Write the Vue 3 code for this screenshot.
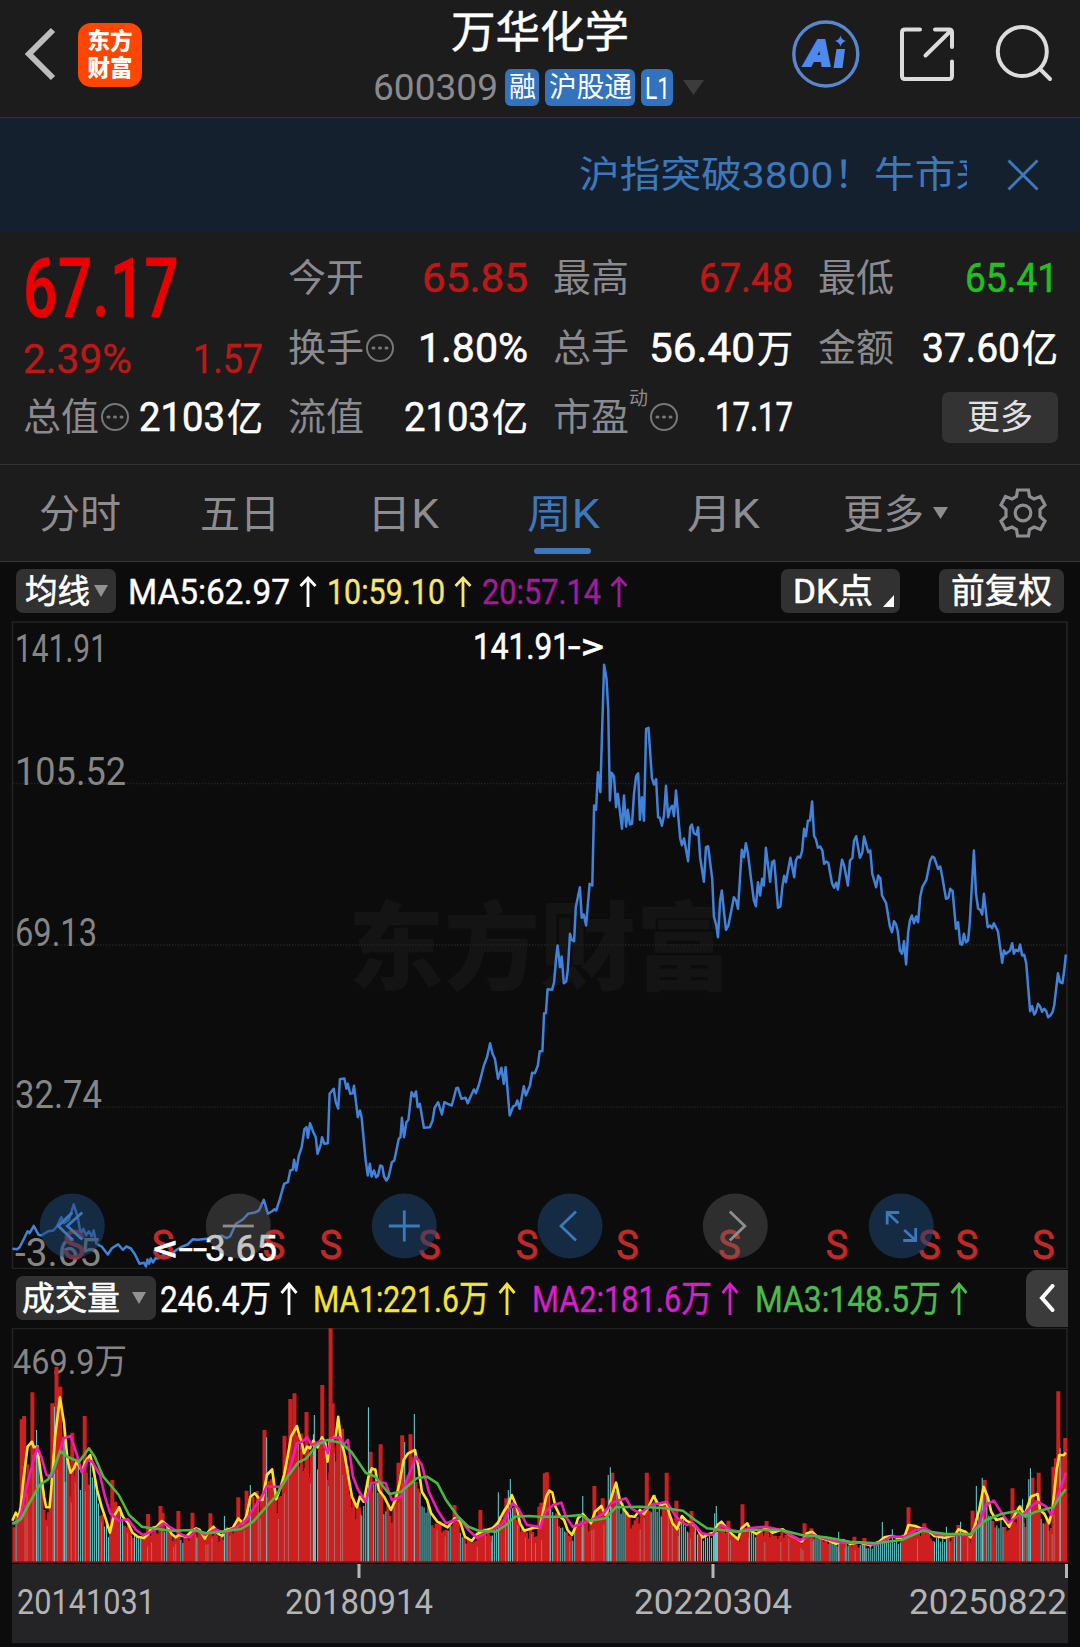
<script setup>
import { h } from 'vue'

// Text set to an exact advance width, centred on its cap height
const FitText = (p) =>
  h('svg', { width: p.w, height: p.size, style: 'display:block;overflow:visible;flex:none' }, [
    h('text', {
      x: 0, y: p.size * 0.857, textLength: p.w, lengthAdjust: 'spacingAndGlyphs',
      'font-size': p.size, 'font-weight': p.weight || 400, fill: 'currentColor',
      stroke: 'currentColor', 'stroke-width': p.thick || 0
    }, p.t)
  ])
FitText.props = ['t', 'w', 'size', 'weight', 'thick']

const stats = [
  [
    { label: '今开', value: '65.85', w: 106, tone: 'red' },
    { label: '最高', value: '67.48', w: 94, tone: 'red' },
    { label: '最低', value: '65.41', w: 93, tone: 'green' }
  ],
  [
    { label: '换手', dots: true, value: '1.80%', w: 110 },
    { label: '总手', value: '56.40', w: 106, unit: '万' },
    { label: '金额', value: '37.60', w: 98, unit: '亿' }
  ]
]

const tabs = [
  { t: '分时', x: 39, w: 82 }, { t: '五日', x: 200, w: 80 }, { t: '日K', x: 367, w: 72 },
  { t: '周K', x: 527, w: 73, on: true }, { t: '月K', x: 687, w: 73 }, { t: '更多', x: 843, w: 81 }
].map((t, i, a) => ({ ...t, gap: t.x - (i ? a[i - 1].x + a[i - 1].w : 0) }))

const SX = 0.34439
const SY = 1 / 3
const parse = (s, ox, oy) =>
  s.trim().split(/\s+/).map((p) => {
    const [x, y] = p.split(',').map(Number)
    return [+(x * SX + ox).toFixed(1), +(y * SY + oy).toFixed(1)]
  })
const str = (a) => a.map((p) => p.join(',')).join(' ')

const price = str([
  ...parse(`36,685 50,686 57,680 66,662 80,632 86,638 98,616 112,643 120,645 140,632 155,630 165,618 178,590 186,608 200,598 214,552 226,590 234,640 242,625 250,645 258,632 266,648 272,630 280,670 295,678 313,702 325,683 343,671 357,688 367,678 380,684 392,702 405,730 418,727 424,738 428,717 433,730 438,714 444,726 452,712 460,714 480,700 495,705 510,690 525,680 545,672 560,656 575,658 600,655 625,648 645,646 658,653 668,648 676,630 685,610 705,597 720,580 740,576 752,570 766,538 778,580 790,572 797,566 802,570 812,538 825,490 836,485 843,450 850,448 854,418 860,450 868,405 876,380 884,326 890,320 894,352 900,308 910,335 917,350 922,400 932,370 935,350 942,370 952,368 957,220 969,205 975,245 982,264 987,176 1000,174 1006,205 1010,190 1017,220 1024,218 1028,196 1039,290 1045,270 1050,290 1062,420 1068,465 1074,430 1079,468 1086,450 1092,470 1098,465 1104,435 1110,438 1115,468 1122,480 1128,470 1138,425 1145,420 1158,355 1163,350 1167,292 1173,350 1180,305 1186,298 1195,215 1202,228 1208,213 1213,260 1219,250 1231,322 1248,320 1256,300 1262,262 1272,245 1283,282 1290,245 1300,250 1312,255 1325,203 1330,202 1340,235 1352,232 1358,248 1368,225 1376,207 1382,218 1390,195 1405,135 1414,110 1423,68 1430,100 1437,115 1446,175 1456,142 1463,190 1468,140 1480,285 1490,258 1497,254 1502,240 1509,265 1521,197 1527,225 1533,210 1539,195 1545,157 1553,158 1562,135 1567,92`, 0, 1020),
  ...parse(`7,1232 12,1118 17,1118 22,1046 35,1048 41,1025 47,950 51,915 58,980 63,948 69,1028 76,1023 81,985 87,880 92,898 99,902 104,800 116,740 121,832 127,822 134,855 144,730 152,735 157,495 163,508 168,395 175,455 186,73 193,115 198,205 203,480 208,397 215,408 221,500 226,460 238,565 244,465 250,558 255,508 261,552 267,550 273,460 279,408 285,398 290,538 296,470 302,541 308,265 315,262 325,412 331,432 337,416 343,530 348,532 354,556 360,525 366,436 372,530 378,504 384,496 389,527 395,450 407,594 412,614 418,594 430,662 436,560 441,552 447,578 454,583 459,560 465,650 476,724 482,620 488,617 500,715 505,828 512,855 517,890 523,780 528,750 535,820 540,868 547,855 563,770 570,782 575,805 586,628 592,650 598,608 604,640 612,710 621,780 627,797 633,725 639,765 645,715 650,735 656,622 668,724 674,665 680,660 691,802 698,798 704,735 709,706 714,725 727,652 738,710 743,660 749,648 755,652 761,632 767,565 772,587 778,541 784,540 790,483 796,587 801,596 807,622 813,618 820,630 825,670 831,663 837,667 848,728 854,742 860,727 865,747 877,658 883,675 894,735 900,660 907,652 912,600 918,587 929,652 936,637 941,588 953,635 959,630 965,700 976,740 982,705 988,713 993,765 1005,788 1016,858 1022,875 1028,842 1034,852 1039,873 1045,930 1051,940 1057,902 1063,972 1069,875 1074,840 1080,825 1086,848 1092,828 1098,845 1104,770 1110,740 1122,718 1133,660 1139,648 1145,652 1156,685 1162,678 1168,708 1179,775 1186,772 1191,745 1198,752 1208,865 1214,845 1220,910 1226,913 1231,880 1237,905 1243,900 1248,845 1260,630 1266,760 1272,804 1278,808 1284,822 1289,760 1300,860 1307,855 1313,863 1318,848 1330,873 1342,967 1347,930 1353,940 1365,930 1371,908 1376,940 1382,928 1389,932 1394,912 1400,945 1406,943 1412,970 1423,1112 1429,1097 1435,1122 1440,1115 1446,1090 1452,1098 1458,1114 1464,1105 1470,1112 1475,1130 1482,1125 1488,1115 1493,1095 1504,998 1510,1025 1517,1028 1522,990 1527,942`, 540, 640)
])

const ma1 = [
  ...parse(`36,632 46,608 54,622 60,590 68,510 80,410 93,395 98,412 108,410 116,470 128,560 134,592 144,592 152,500 160,380 174,262 186,340 196,450 205,488 215,475 222,455 230,468 238,485 247,455 262,435 270,470 282,540 295,590 308,630 319,668 330,620 346,592 357,620 372,640 385,668 400,680 418,684 430,672 440,655 455,650 470,633 485,645 498,672 510,682 520,675 540,680 555,665 570,655 580,660 595,686 605,665 620,650 632,670 645,678 655,660 675,655 692,625 705,640 715,620 727,560 740,550 752,565 762,570 775,495 790,478 802,568 815,530 825,495 835,440 845,380 862,348 868,372 877,400 882,430 892,410 900,415 910,392 922,412 935,382 945,400 951,455 958,390 975,380 982,320 990,390 1000,430 1010,490 1022,560 1036,592 1045,560 1056,575 1070,500 1080,475 1090,480 1100,540 1115,560 1135,600 1148,570 1160,520 1172,450 1185,430 1205,420 1215,470 1225,545 1240,570 1252,610 1270,635 1300,652 1320,625 1335,632 1350,680 1370,693 1385,672 1405,662 1430,655 1445,640 1460,610 1475,585 1486,555 1500,590 1510,640 1522,662 1545,655 1566,652`, 0, 1310),
  ...parse(`0,650 10,600 18,560 27,542 36,548 45,590 60,622 70,630 80,660 93,675 103,650 110,625 125,612 135,625 148,640 160,605 178,588 190,615 200,590 208,560 221,518 232,570 245,600 258,618 275,620 290,600 302,612 315,590 330,558 342,580 352,585 368,580 375,610 385,640 398,658 412,618 425,632 440,640 455,652 472,682 490,672 505,668 515,645 527,635 540,652 560,675 575,688 585,655 602,640 612,662 628,672 645,660 660,655 675,668 705,658 725,675 745,685 760,695 775,670 790,665 805,680 835,690 860,702 880,690 900,702 925,697 960,706 985,695 1000,682 1020,678 1045,685 1060,675 1070,645 1090,648 1105,655 1125,660 1145,678 1175,683 1205,675 1215,658 1235,665 1250,682 1262,650 1275,600 1288,530 1300,560 1310,605 1325,630 1345,625 1362,650 1378,615 1393,590 1408,615 1425,560 1445,552 1452,600 1465,612 1478,640 1488,600 1500,480 1508,435 1520,436 1527,428`, 540, 1310)
]
const ma2 = [
  ...parse(`36,638 50,640 62,605 75,540 90,480 108,412 120,440 135,495 152,500 168,440 185,385 205,378 222,430 238,488 255,450 268,455 290,495 305,560 320,610 345,632 372,628 395,660 415,675 440,665 475,640 500,655 530,675 550,682 570,658 595,675 625,658 650,668 690,650 715,630 740,590 765,550 775,528 790,530 815,530 835,500 862,400 877,395 892,382 905,405 935,392 952,430 962,385 985,382 1000,402 1010,390 1025,500 1040,540 1062,575 1078,520 1100,515 1120,520 1138,570 1165,560 1185,500 1208,440 1225,465 1245,545 1270,600 1295,640 1335,625 1360,660 1385,683 1430,660 1460,640 1488,580 1505,595 1530,645 1566,650`, 0, 1310),
  ...parse(`0,655 15,605 38,585 62,578 75,620 95,650 125,640 150,630 185,610 208,578 250,565 265,595 290,610 325,585 368,575 395,620 425,645 445,640 470,670 500,675 525,645 555,660 580,665 605,655 655,650 700,660 755,690 790,675 835,688 880,698 930,697 975,705 1020,680 1060,680 1090,660 1120,655 1150,675 1200,675 1250,675 1275,640 1295,585 1318,572 1335,600 1360,638 1385,620 1408,610 1425,590 1445,575 1470,590 1485,615 1500,565 1515,525 1527,488`, 540, 1310)
]
const ma3 = [
  ...parse(`36,642 60,628 85,580 115,525 140,508 155,480 175,422 195,440 230,455 258,415 275,440 300,500 345,555 375,615 412,650 440,655 500,662 560,660 600,670 640,665 700,657 735,635 765,600 800,560 835,500 865,458 890,445 920,405 950,390 990,398 1020,425 1062,488 1090,500 1130,552 1165,545 1210,505 1240,500 1270,520 1295,570 1330,620 1360,650 1390,662 1440,665 1470,645 1495,620 1535,618 1566,620`, 0, 1310),
  ...parse(`0,620 60,620 120,615 145,632 190,625 220,592 290,590 365,595 415,602 450,630 485,655 570,665 620,660 700,660 760,675 830,682 900,695 975,700 1050,690 1110,662 1180,672 1250,672 1295,630 1340,612 1385,603 1410,620 1440,605 1490,592 1510,560 1527,538`, 540, 1310)
]

const upPeaks = [
  ...parse(`63,328 70,318 94,247 152,280 164,170 175,230 210,368 246,318 326,510 335,575 430,612 466,588 472,608 518,603 559,608 611,610 692,562 716,542 768,360 826,377 843,267 855,250 890,306 936,225 960,55 966,280 993,356 1076,425 1105,403 1157,458 1168,376 1192,373 1320,585 1395,600 1470,565 1566,590`, 0, 1310),
  ...parse(`4,578 14,490 20,487 158,528 182,565 210,488 310,488 368,488 396,572 440,603 547,632 588,583 658,633 768,640 788,655 913,680 942,684 1070,592 1116,640 1215,645 1256,602 1291,510 1372,535 1390,590 1430,503 1448,488 1491,470 1498,445 1505,244 1525,384`, 540, 1310)
]
const downPeaks = [
  ...parse(`106,360 158,290 188,515 652,618 727,525 774,382 913,315 1070,292 1175,396 1203,312 1447,547 1476,540 1482,507`, 0, 1310),
  ...parse(`124,558 198,495 204,472 507,610 512,588 867,665 994,636 1023,658 1180,650 1221,635 1267,528 1284,503 1401,568 1419,508 1424,475 1510,415`, 540, 1310)
]
const range = (s, ox) => s.split(' ').map((r) => r.split('-').map((v) => v * SX + ox))
const downRuns = [
  ...range('44-50 108-120 186-198 224-240 262-290 298-318 345-357 385-410 478-490 525-535 570-576 655-665 908-925 946-950 1048-1068 1080-1100 1112-1125 1214-1250 1300-1310 1335-1345 1428-1448 1478-1490', 0),
  ...range('28-38 58-75 93-103 192-208 220-250 320-352 402-432 450-462 468-520 605-628 795-818 838-860 885-895 925-1050 1145-1185 1200-1210 1265-1287 1296-1310 1323-1345 1410-1425 1450-1465', 540)
]
const at = (line, x) => {
  for (let i = 1; i < line.length; i++) {
    if (line[i][0] >= x) {
      const [a, b] = [line[i - 1], line[i]]
      return a[1] + ((b[1] - a[1]) * (x - a[0])) / (b[0] - a[0] || 1)
    }
  }
  return line[line.length - 1][1]
}
const noise = (i) => {
  const n = Math.sin(i * 127.1 + 3.7) * 43758.5453
  return n - Math.floor(n)
}
const FLOOR = 1562
const bar = (x, y, w) => `M${(x - w / 2).toFixed(1)},${FLOOR}V${y.toFixed(1)}h${w}V${FLOOR}Z`
let up = ''
let down = ''
let mixed = ''
for (let i = 0; i < 524; i++) {
  const x = 14 + i * 2.01
  const height = (FLOOR - at(ma1, x)) * (0.72 + noise(i) * 0.36)
  const y = FLOOR - height
  if (downRuns.some(([a, b]) => x >= a && x <= b)) down += bar(x, y, 1.1)
  else {
    up += bar(x, y, 3)
    if (noise(i + 900) < 0.26) mixed += bar(x + 1, y + 6, 0.9)
  }
}
upPeaks.forEach(([x, y]) => { up += bar(x, y, 4) })
downPeaks.forEach(([x, y]) => { down += bar(x, y, 1.1) })

const yLabels = [
  { t: '141.91', y: 661, w: 92 }, { t: '105.52', y: 784, w: 111 }, { t: '69.13', y: 945.5, w: 82 },
  { t: '32.74', y: 1107.5, w: 87 }, { t: '-3.65', y: 1265.5, w: 86 }
]
const signals = [73.7, 163, 274, 331, 429.5, 527, 627.5, 729.5, 837, 929.5, 967, 1043.5]
const buttons = [
  { x: 72.3, c: 'blue', d: 'M0,-13.500L-14,0L0,13.500M10,-13.500L-5,0L10,13.500' },
  { x: 238.3, c: 'grey', d: 'M-15.5,0H15.5' },
  { x: 404.3, c: 'blue', d: 'M-15.5,0H15.5M0,-15.5V15.5' },
  { x: 570, c: 'blue', d: 'M6,-14.5L-9,0L6,14.5' },
  { x: 735.3, c: 'grey', d: 'M-5.500,-14.5L9.500,0L-5.500,14.5' },
  { x: 901.2, c: 'blue', d: 'M-2,-13.500H-14V-1.500M-14,-13.500L-3,-3M2,14.500H14.500V2M14.500,14.500L3,4' }
]
</script>

<template>
  <main class="screen">
    <header class="top">
      <svg class="back" width="34" height="56" viewBox="0 0 34 56"><path d="M30,4L6,28L30,52" /></svg>
      <div class="logo"><span>东方</span><span>财富</span></div>
      <div class="heading">
        <h1><FitText t="万华化学" :w="178" :size="44" :thick="0.5" /></h1>
        <div class="code">
          <FitText t="600309" :w="125" :size="36" />
          <b class="tag one"><FitText t="融" :w="27" :size="28" /></b>
          <b class="tag two"><FitText t="沪股通" :w="83" :size="28" /></b>
          <b class="tag three"><FitText t="L1" :w="25" :size="31" /></b>
          <svg class="caret" width="21" height="15"><path d="M0,0H21L10.500,15Z" fill="#3c3c3c" /></svg>
        </div>
      </div>
      <svg class="tools" width="270" height="80" viewBox="785 14 270 80">
        <circle cx="825.8" cy="54" r="32" fill="none" stroke="#5a86cf" stroke-width="3.4" />
        <text x="805.500" y="65.500" font-size="37" font-weight="900" font-style="italic" fill="#5089ee" stroke="#5089ee" stroke-width="2" textLength="26" lengthAdjust="spacingAndGlyphs">A</text>
        <path d="M836.500,49H845L842.500,68H833.500Z" fill="#5089ee" />
        <path d="M840.500,35.500Q841.700,40 846,41Q841.700,42 840.500,46.500Q839.300,42 835,41Q839.300,40 840.500,35.500Z" fill="#5089ee" />
        <path d="M920,29.500H905Q902,29.500 902,32.500V76Q902,79 905,79H949Q952,79 952,76V61.500M935,29.500H949Q952,29.500 952,32.500V47M950,31.500L925.500,55.500" class="line" />
        <circle cx="1022.300" cy="51.500" r="24.500" class="line" /><path d="M1040,69L1050,79" class="line" />
      </svg>
    </header>

    <section class="banner">
      <div class="ticker"><FitText t="沪指突破3800！牛市来了" :w="458" :size="37" /></div>
      <svg width="32" height="32" viewBox="0 0 32 32"><path d="M1.500,1.500L30.500,30.500M30.500,1.500L1.500,30.500" /></svg>
    </section>

    <section class="quote">
      <div class="last">
        <FitText class="price" t="67.17" :w="156" :size="84" :weight="600" />
        <div class="change"><FitText t="2.39%" :w="109" :size="40" :thick="0.4" /><FitText t="1.57" :w="70" :size="40" :thick="0.4" /></div>
      </div>
      <div class="stats">
        <div v-for="(row, r) in stats" :key="r" class="row">
          <div v-for="s in row" :key="s.label" class="cell">
            <FitText class="label" :t="s.label" :w="76" :size="37.500" />
            <svg v-if="s.dots" class="dots" width="30" height="30"><circle cx="15" cy="15" r="13" /><path d="M8,15H9M14.500,15H15.500M21,15H22" /></svg>
            <i />
            <FitText :class="s.tone" :t="s.value" :w="s.w" :size="40" :thick="0.6" />
            <FitText v-if="s.unit" class="unit" :t="s.unit" :w="36" :size="38" :thick="0.5" />
          </div>
        </div>
      </div>
      <div class="row bottom">
        <div class="cell">
          <FitText class="label" t="总值" :w="76" :size="37.500" />
          <svg class="dots" width="30" height="30"><circle cx="15" cy="15" r="13" /><path d="M8,15H9M14.500,15H15.500M21,15H22" /></svg>
          <i /><FitText t="2103" :w="86" :size="40" :thick="0.6" /><FitText class="unit" t="亿" :w="36" :size="38" :thick="0.5" />
        </div>
        <div class="cell">
          <FitText class="label" t="流值" :w="76" :size="37.500" />
          <i /><FitText t="2103" :w="86" :size="40" :thick="0.6" /><FitText class="unit" t="亿" :w="36" :size="38" :thick="0.5" />
        </div>
        <div class="cell">
          <FitText class="label" t="市盈" :w="76" :size="37.500" />
          <FitText class="label sup" t="动" :w="19" :size="19" />
          <svg class="dots" width="30" height="30"><circle cx="15" cy="15" r="13" /><path d="M8,15H9M14.500,15H15.500M21,15H22" /></svg>
          <i /><FitText t="17.17" :w="78" :size="40" :thick="0.6" />
        </div>
        <div class="cell end"><button class="more"><FitText t="更多" :w="66" :size="34" /></button></div>
      </div>
    </section>

    <nav class="tabs">
      <div v-for="t in tabs" :key="t.t" class="tab" :class="{ on: t.on }" :style="{ marginLeft: t.gap + 'px' }">
        <FitText :t="t.t" :w="t.w" :size="40" />
      </div>
      <svg class="tabcaret" width="15" height="12"><path d="M0,0H15L7.500,12Z" fill="#8d8c91" /></svg>
      <svg class="gear" width="48" height="50" viewBox="-24 -25 48 50">
        <path d="M-5.500,-23H5.500L6.500,-16.500L11,-14L17.500,-16.500L22,-8L17,-3.500V3.500L22,8L17.500,16.500L11,14L6.500,16.500L5.500,23H-5.500L-6.500,16.500L-11,14L-17.500,16.500L-22,8L-17,3.500V-3.500L-22,-8L-17.500,-16.500L-11,-14L-6.500,-16.500Z" />
        <circle r="7.800" />
      </svg>
    </nav>

    <div class="legend">
      <button class="pill avg"><FitText t="均线" :w="65" :size="33" :thick="0.6" /><svg width="14" height="12"><path d="M0,0H14L7,12Z" fill="#929292" /></svg></button>
      <span class="item w"><FitText t="MA5:62.97" :w="162" :size="35" :thick="0.4" /><svg class="arrow" width="18" height="31"><path d="M9,31V2M1.500,10L9,2L16.500,10" /></svg></span>
      <span class="item y"><FitText t="10:59.10" :w="118" :size="35" :thick="0.4" /><svg class="arrow" width="18" height="31"><path d="M9,31V2M1.500,10L9,2L16.500,10" /></svg></span>
      <span class="item p"><FitText t="20:57.14" :w="119" :size="35" :thick="0.4" /><svg class="arrow" width="18" height="31"><path d="M9,31V2M1.500,10L9,2L16.500,10" /></svg></span>
      <i />
      <button class="pill dk"><FitText t="DK点" :w="80" :size="34" :thick="0.6" /><svg width="11" height="12"><path d="M11,0V12H0Z" fill="#fff" /></svg></button>
      <button class="pill fq"><FitText t="前复权" :w="101" :size="34" :thick="0.6" /></button>
    </div>

    <svg class="chart" width="1080" height="648" viewBox="0 620.500 1080 648">
      <text class="mark" x="348" y="981" font-size="96" textLength="384" lengthAdjust="spacingAndGlyphs">东方财富</text>
      <path class="grid" d="M13,783H1067M13,944.500H1067M13,1106.700H1067" />
      <path class="frame" d="M12.500,621.500H1067V1268H12.500Z" />
      <polyline :points="price" fill="none" stroke="#4182da" stroke-width="2.500" stroke-linejoin="round" />
      <text v-for="l in yLabels" :key="l.t" x="15" :y="l.y" font-size="38" :textLength="l.w" lengthAdjust="spacingAndGlyphs" fill="#858585">{{ l.t }}</text>
      <text v-for="x in signals" :key="x" :x="x" y="1258.500" font-size="41" text-anchor="middle" fill="#bd2a29" stroke="#bd2a29" stroke-width=".9" textLength="22.500" lengthAdjust="spacingAndGlyphs">S</text>
      <g fill="#fff" stroke="#fff" stroke-width=".6" font-size="37">
        <text x="473" y="658.500" textLength="97" lengthAdjust="spacingAndGlyphs">141.91</text>
        <text x="568" y="658.500" textLength="36" lengthAdjust="spacingAndGlyphs">-&gt;</text>
        <text x="153" y="1260" textLength="54" lengthAdjust="spacingAndGlyphs">&lt;--</text>
        <text x="205" y="1260" textLength="72" lengthAdjust="spacingAndGlyphs">3.65</text>
      </g>
      <g v-for="b in buttons" :key="b.x" :transform="`translate(${b.x} 1225.500)`" :class="['ctl', b.c]">
        <circle r="32.500" /><path :d="b.d" />
      </g>
    </svg>

    <div class="legend vol">
      <button class="pill cjl"><FitText t="成交量" :w="98" :size="33" :thick="0.6" /><svg width="14" height="12"><path d="M0,0H14L7,12Z" fill="#929292" /></svg></button>
      <span class="item w"><FitText t="246.4万" :w="111" :size="37" :thick="0.4" /><svg class="arrow" width="18" height="33"><path d="M9,33V2M1.500,11L9,2L16.500,11" /></svg></span>
      <span class="item y2"><FitText t="MA1:221.6万" :w="176" :size="37" :thick="0.4" /><svg class="arrow" width="18" height="33"><path d="M9,33V2M1.500,11L9,2L16.500,11" /></svg></span>
      <span class="item p2"><FitText t="MA2:181.6万" :w="180" :size="37" :thick="0.4" /><svg class="arrow" width="18" height="33"><path d="M9,33V2M1.500,11L9,2L16.500,11" /></svg></span>
      <span class="item g"><FitText t="MA3:148.5万" :w="186" :size="37" :thick="0.4" /><svg class="arrow" width="18" height="33"><path d="M9,33V2M1.500,11L9,2L16.500,11" /></svg></span>
      <i />
      <button class="side"><svg width="16" height="28"><path d="M13.500,2L3,14L13.500,26" /></svg></button>
    </div>

    <svg class="chart" width="1080" height="236" viewBox="0 1328 1080 236">
      <path class="frame" d="M12.500,1562V1328.500H1067V1562" />
      <text x="13" y="1374" font-size="35" textLength="114" lengthAdjust="spacingAndGlyphs" fill="#858585">469.9万</text>
      <path :d="up" fill="#cd1f1f" />
      <path :d="mixed" fill="#b0706c" />
      <path :d="down" fill="#66c4c4" />
      <path d="M12,1562H1068" stroke="#7c1c1c" stroke-width="1.500" />
      <polyline :points="str(ma1)" class="ma" stroke="#ffe02c" />
      <polyline :points="str(ma2)" class="ma" stroke="#f01bb4" />
      <polyline :points="str(ma3)" class="ma" stroke="#4cb840" />
    </svg>

    <svg class="axis" width="1056" height="79" viewBox="12 1564 1056 79">
      <path d="M359,1564V1578M713,1564V1578M1066.500,1564V1578" stroke="#b5b5b5" stroke-width="3" />
      <g font-size="35" fill="#b4b4b4">
        <text x="17" y="1614" textLength="138" lengthAdjust="spacingAndGlyphs">20141031</text>
        <text x="285" y="1614" textLength="148" lengthAdjust="spacingAndGlyphs">20180914</text>
        <text x="634" y="1614" textLength="158" lengthAdjust="spacingAndGlyphs">20220304</text>
        <text x="909" y="1614" textLength="158" lengthAdjust="spacingAndGlyphs">20250822</text>
      </g>
    </svg>
  </main>
</template>

<style>
body { background: #0c0c0c; }
</style>

<style scoped>
.screen { width: 1080px; height: 1647px; overflow: hidden; background: #0c0c0c; color: #fff; font-family: Roboto, "Noto Sans CJK SC", sans-serif; }
.screen * { box-sizing: border-box; }
i { flex: 1; }
button { border: 0; padding: 0; color: #fff; font: inherit; display: flex; align-items: center; }

.top { height: 118px; background: #1c1c1c; border-bottom: 1px solid #303436; display: flex; align-items: flex-start; }
.back { margin: 26px 0 0 23px; fill: none; stroke: #bdbdbd; stroke-width: 6; }
.logo { width: 64px; height: 64px; margin: 22.5px 0 0 21px; border-radius: 13px; background: #ff4600; display: flex; flex-direction: column; align-items: center; justify-content: center; font: 900 22.5px/27px "Noto Sans CJK SC", sans-serif; }
.logo span { position: relative; top: -1.5px; }
.heading { width: 352px; margin-left: 220px; display: flex; flex-direction: column; align-items: center; }
h1 { margin: 9.5px 0 0 3px; font-weight: 400; }
.code { align-self: flex-start; margin: 15px 0 0 11px; display: flex; align-items: center; color: #8a898e; height: 37px; }
.tag { height: 37px; border-radius: 6px; background: #3373bd; color: #fff; display: flex; align-items: center; justify-content: center; font-weight: 400; }
.one { width: 34px; margin-left: 7px; }
.two { width: 90px; margin-left: 6px; }
.three { width: 32px; margin-left: 6px; }
.caret { margin-left: 10px; }
.tools { margin: 14px 0 0 71px; flex: none; }
.line { fill: none; stroke: #dcdcdc; stroke-width: 4; stroke-linecap: round; }

.banner { height: 113px; background: #15202e; display: flex; align-items: center; padding-left: 579px; color: #3d78ba; }
.ticker { width: 388px; height: 50px; overflow: hidden; display: flex; align-items: center; }
.banner > svg { margin-left: 40px; fill: none; stroke: #3d78ba; stroke-width: 3; }

.quote { height: 234px; background: #1c1c1c; border-bottom: 1px solid #333; display: grid; grid-template-columns: 240px 770px; grid-template-rows: 151px 70px; column-gap: 25px; padding-left: 23px; }
.last { padding-top: 14px; color: #ea0000; }
.change { display: flex; justify-content: space-between; margin-top: 10px; color: #bd1818; }
.stats { padding-top: 12px; }
.row { display: grid; grid-template-columns: repeat(3, 240px); column-gap: 25px; height: 70px; }
.bottom { grid-column: 1 / 3; grid-template-columns: repeat(4, 240px); }
.cell { display: flex; align-items: center; }
.label { color: #8b8a8f; }
.dots { margin-left: 1px; fill: none; stroke: #77777a; stroke-width: 2; flex: none; }
.dots path { stroke-width: 3; stroke-linecap: round; }
.unit { margin-left: 2px; }
.sup { margin-top: -38px; }
.red { color: #bd1818; }
.green { color: #21bf21; }
.end { justify-content: flex-end; }
.more { width: 116px; height: 51px; border-radius: 7px; background: #333; color: #e2e2e2; justify-content: center; }

.tabs { height: 97px; background: #1c1c1c; border-bottom: 1px solid #353535; display: flex; align-items: center; color: #8d8c91; }
.tab { height: 96px; display: flex; flex-direction: column; align-items: center; justify-content: center; position: relative; flex: none; padding-top: 2px; }
.on { color: #3d78ba; }
.on::after { content: ""; position: absolute; bottom: 7px; left: 7px; width: 57px; height: 6px; border-radius: 3px; background: #3d78ba; }
.tabcaret { margin-left: 9px; }
.gear { margin-left: 51px; fill: none; stroke: #8d8c91; stroke-width: 3.2; }

.legend { height: 58.5px; display: flex; align-items: center; padding-left: 16px; }
.pill { height: 44px; border-radius: 7px; background: #313131; flex: none; }
.avg { width: 100px; padding-left: 9px; gap: 4px; }
.item { display: flex; align-items: center; flex: none; }
.arrow { margin-left: 9px; fill: none; stroke: currentColor; stroke-width: 2.8; }
.w { margin-left: 12px; }
.y { margin-left: 10px; color: #f7e673; }
.p { margin-left: 10px; color: #a11c9c; }
.dk { width: 119px; padding-left: 12px; gap: 10px; margin-right: 39px; }
.dk svg:last-child { align-self: flex-end; margin-bottom: 6px; }
.fq { width: 125px; justify-content: center; margin-right: 16px; }
.chart { display: block; }
.frame { fill: none; stroke: #232323; stroke-width: 1.6; }
.grid { stroke: #232323; stroke-width: 1.3; stroke-dasharray: 1.5 1.5; }
.mark { fill: #141414; font-family: "Noto Sans CJK SC", sans-serif; font-weight: 900; }
.ctl path { fill: none; stroke: #3d78ba; stroke-width: 2.8; }
.blue circle { fill: #1e4673; fill-opacity: .54; }
.grey circle { fill: #666; fill-opacity: .38; }
.grey path { stroke: #8e8e8e; }

.vol { height: 59.5px; }
.cjl { width: 140px; padding-left: 6px; gap: 12px; }
.vol .w { margin-left: 4px; }
.y2 { margin-left: 15px; color: #f3e43a; }
.p2 { margin-left: 16px; color: #d51fca; }
.g { margin-left: 16px; color: #4bbb4b; }
.side { width: 42px; height: 57px; margin-right: 12px; border-radius: 10px 0 0 10px; background: #3b3b3b; justify-content: center; }
.side path { fill: none; stroke: #fff; stroke-width: 4; stroke-linecap: round; }
.ma { fill: none; stroke-width: 2.6; stroke-linejoin: round; }
.axis { display: block; margin-left: 12px; background: #242426; }
</style>
